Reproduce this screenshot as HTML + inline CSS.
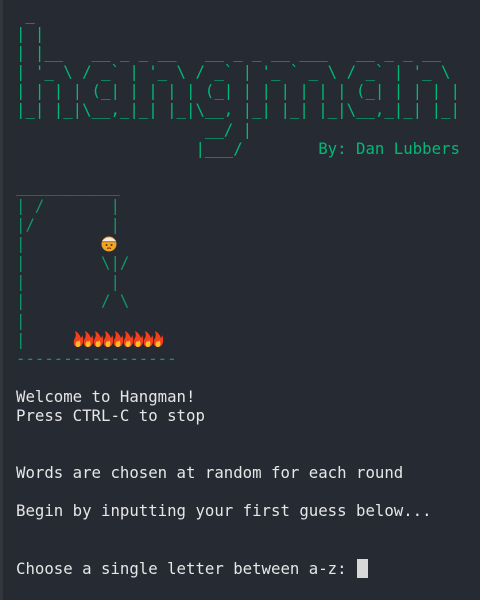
<!DOCTYPE html>
<html><head><meta charset="utf-8"><style>
html,body{margin:0;padding:0;background:#262a33;width:480px;height:600px;overflow:hidden}
body{position:relative}
.bar{position:absolute;left:0;top:0;width:3px;height:600px;background:#33363d}
pre{position:absolute;left:16px;top:5px;margin:0;font-family:"DejaVu Sans Mono","Liberation Mono",monospace;font-size:15.7px;line-height:19.1px;color:#e6e6e6}
.g{color:#00b978}
.d{color:#0d9a6a}
.cur{position:absolute;left:357px;top:559px;width:11px;height:19px;background:#d8d8d8}
.e{position:absolute}
</style></head><body>
<div class="bar"></div>
<pre><span class="g"> _
| |
| |__   __ _ _ __   __ _ _ __ ___   __ _ _ __
| '_ \ / _` | '_ \ / _` | '_ ` _ \ / _` | '_ \
| | | | (_| | | | | (_| | | | | | | (_| | | | |
|_| |_|\__,_|_| |_|\__, |_| |_| |_|\__,_|_| |_|
                    __/ |
                   |___/        By: Dan Lubbers</span>

<span class="d">___________
| /       |
|/        |
|
|        \|/
|         |
|        / \
|
|
-----------------</span>

Welcome to Hangman!
Press CTRL-C to stop


Words are chosen at random for each round

Begin by inputting your first guess below...


Choose a single letter between a-z: </pre>
<div class="cur"></div>
<svg class="e" style="left:100px;top:234px" width="18" height="18" viewBox="0 0 18 18">
<circle cx="9" cy="10" r="7.5" fill="#f2a521"/>
<path d="M2 7 Q9 0 16 7 L16 8 L2 8Z" fill="#f4ead8"/>
<rect x="2" y="7" width="14" height="1.5" fill="#c8803a"/>
<circle cx="6.5" cy="11" r="1" fill="#5a3210"/><circle cx="11.5" cy="11" r="1" fill="#5a3210"/>
<path d="M7 14.5 Q9 13.5 11 14.5" stroke="#5a3210" fill="none"/>
</svg>
<svg class="e" style="left:73px;top:330px" width="92" height="18" viewBox="0 0 92 18">
<defs><g id="f"><path d="M5 17 C0 17 0 11 2 8 C3 6 3 4 2 1 C6 3 7 6 8 8 C9 7 9 6 9 5 C11 8 11 17 5 17Z" fill="#f0421c"/><path d="M5 17 C2 17 2 13 4 11 C5 12 6 12 6 10 C8 12 8 17 5 17Z" fill="#ffc02a"/></g></defs>
<use href="#f" x="0"/><use href="#f" x="10"/><use href="#f" x="20"/><use href="#f" x="30"/><use href="#f" x="40"/><use href="#f" x="50"/><use href="#f" x="60"/><use href="#f" x="70"/><use href="#f" x="80"/>
</svg>
</body></html>
